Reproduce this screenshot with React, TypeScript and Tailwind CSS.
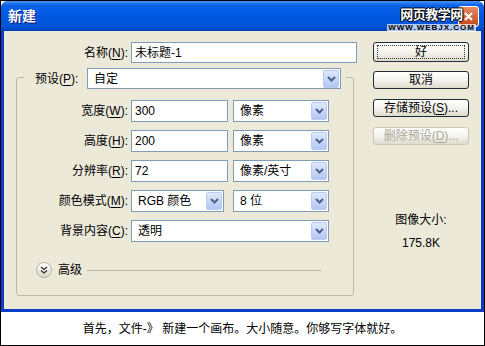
import React from "react";

const font = "font-['Liberation_Sans','Noto_Sans_CJK_SC',sans-serif]";

const Chevron = () => (
  <svg width="9" height="6" viewBox="0 0 9 6">
    <path d="M1 1l3.5 3.5L8 1" fill="none" stroke="#4d6185" strokeWidth="2" />
  </svg>
);

const Label = ({ text, k, w }: { text: string; k: string; w: string }) => (
  <div className={`${w} shrink-0 text-right text-[12px] leading-none text-black`}>
    {text}(<span className="underline underline-offset-2">{k}</span>):
  </div>
);

const Input = ({ value, w, h = "h-[22px]" }: { value: string; w: string; h?: string }) => (
  <div className={`${w} ${h} flex items-center border border-[#7f9db9] bg-white pl-[3px] text-[12px] leading-none`}>
    {value}
  </div>
);

const Select = ({ value, w, h = "h-[22px]" }: { value: string; w: string; h?: string }) => (
  <div className={`${w} ${h} flex items-center border border-[#7f9db9] bg-white text-[12px] leading-none`}>
    <span className="flex-1 pl-[6px]">{value}</span>
    <div className="mr-[1px] flex h-[18px] w-[16px] items-center justify-center rounded-[2px] border border-[#b9cbf3] bg-gradient-to-b from-[#dfe8fc] to-[#b3c7f5]">
      <Chevron />
    </div>
  </div>
);

const Row = ({ label, k, children }: { label: string; k: string; children: React.ReactNode }) => (
  <div className="flex h-[22px] items-center">
    <Label text={label} k={k} w="w-[111px]" />
    <div className="ml-[3px] flex items-center">{children}</div>
  </div>
);

const Button = ({ children, h = "h-[18px]", disabled = false }: { children: React.ReactNode; h?: string; disabled?: boolean }) => (
  <div
    className={`${h} flex w-[96px] items-center justify-center rounded-[3px] border bg-gradient-to-b from-white via-[#f4f3ee] to-[#dedbcc] text-[12px] leading-none ${
      disabled ? "border-[#c9c7ba] text-[#aca899]" : "border-[#1f2a3a] text-black"
    }`}
  >
    {children}
  </div>
);

export default function App() {
  return (
    <div className={`h-[346px] w-[485px] border border-black bg-white ${font}`}>
      {/* window */}
      <div className="h-[311px] rounded-t-[7px] bg-[#0a3cc4]">
        <div className="relative flex h-[30px] items-center rounded-t-[7px] bg-[linear-gradient(to_bottom,#4a94f8_0%,#0c63ea_14%,#0058e2_50%,#0054d8_85%,#0040bc_100%)] pl-[7px] pr-[5px]">
          <span className="text-[14px] font-bold leading-none text-white [text-shadow:1px_1px_#0a1a7a]">新建</span>
          <div className="ml-auto flex h-[21px] w-[21px] items-center justify-center rounded-[3px] border border-white bg-gradient-to-b from-[#e98a62] to-[#c2451b]">
            <svg width="11" height="11" viewBox="0 0 11 11">
              <path d="M2 2l7 7M9 2l-7 7" stroke="white" strokeWidth="2" />
            </svg>
          </div>
          {/* watermark */}
          <div className="absolute right-[8px] top-[6px] flex flex-col items-center">
            <span className="text-[13px] font-bold leading-[16px] tracking-[-0.5px] text-white [text-shadow:-1px_0_#000,1px_0_#000,0_-1px_#000,0_1px_#000]">
              网页教学网
            </span>
            <span className="mt-[1px] bg-white/70 px-[1px] text-[8px] font-bold leading-[8px] tracking-[1px] text-black">
              WWW.WEBJX.COM
            </span>
          </div>
        </div>
        {/* body */}
        <div className="mx-[3px] flex h-[278px] bg-[#ece9d8] pl-[12px] pt-[11px]">
          <div className="flex w-[341px] flex-col">
            <div className="flex h-[21px] items-center">
              <Label text="名称" k="N" w="w-[112px]" />
              <div className="ml-[3px]">
                <Input value="未标题-1" w="w-[226px]" h="h-[21px]" />
              </div>
            </div>
            <div className="mt-[14px] w-[338px] rounded-[3px] border border-[#bcb9aa] pb-[17px]">
              <div className="-mt-[10px] ml-[7px] flex h-[21px] w-[322px] items-center bg-[#ece9d8] pl-[11px]">
                <div className="w-[52px] text-[12px] leading-none">
                  预设(<span className="underline underline-offset-2">P</span>):
                </div>
                <Select value="自定" w="w-[254px]" h="h-[21px]" />
              </div>
              <div className="mt-[11px] flex flex-col gap-[8px]">
                <Row label="宽度" k="W">
                  <Input value="300" w="w-[97px]" />
                  <div className="ml-[5px]">
                    <Select value="像素" w="w-[96px]" />
                  </div>
                </Row>
                <Row label="高度" k="H">
                  <Input value="200" w="w-[97px]" />
                  <div className="ml-[5px]">
                    <Select value="像素" w="w-[96px]" />
                  </div>
                </Row>
                <Row label="分辨率" k="R">
                  <Input value="72" w="w-[97px]" />
                  <div className="ml-[5px]">
                    <Select value="像素/英寸" w="w-[96px]" />
                  </div>
                </Row>
                <Row label="颜色模式" k="M">
                  <Select value="RGB 颜色" w="w-[93px]" />
                  <div className="ml-[9px]">
                    <Select value="8 位" w="w-[96px]" />
                  </div>
                </Row>
                <Row label="背景内容" k="C">
                  <Select value="透明" w="w-[198px]" />
                </Row>
              </div>
              <div className="mt-[20px] flex h-[16px] items-center pl-[19px] pr-[32px]">
                <div className="flex h-[16px] w-[16px] items-center justify-center rounded-full border border-[#b4b2a4] bg-gradient-to-b from-white to-[#dcd9cb]">
                  <svg width="8" height="8" viewBox="0 0 8 8">
                    <path d="M1 1l3 2.5L7 1M1 4.5l3 2.5L7 4.5" fill="none" stroke="#333" strokeWidth="1.3" />
                  </svg>
                </div>
                <span className="ml-[6px] text-[12px] leading-none">高级</span>
                <div className="ml-[5px] h-px flex-1 bg-[#b8b6a8]" />
              </div>
            </div>
          </div>
          <div className="ml-[16px] flex w-[96px] flex-col items-center">
            <Button h="h-[20px]">
              <div className="flex h-[14px] w-[88px] items-center justify-center border border-dotted border-[#333]">好</div>
            </Button>
            <div className="mt-[9px]">
              <Button>取消</Button>
            </div>
            <div className="mt-[10px]">
              <Button>
                存储预设(<span className="underline underline-offset-2">S</span>)...
              </Button>
            </div>
            <div className="mt-[10px]">
              <Button disabled>
                删除预设(<span className="underline underline-offset-2">D</span>)...
              </Button>
            </div>
            <div className="mt-[67px] flex h-[16px] items-center text-[12px] leading-none">图像大小:</div>
            <div className="mt-[7px] flex h-[16px] items-center text-[12px] leading-none">175.8K</div>
          </div>
        </div>
      </div>
      {/* caption */}
      <div className="flex h-[33px] items-center justify-center text-[12px] leading-none text-black">
        首先，文件-》 新建一个画布。大小随意。你够写字体就好。
      </div>
    </div>
  );
}
